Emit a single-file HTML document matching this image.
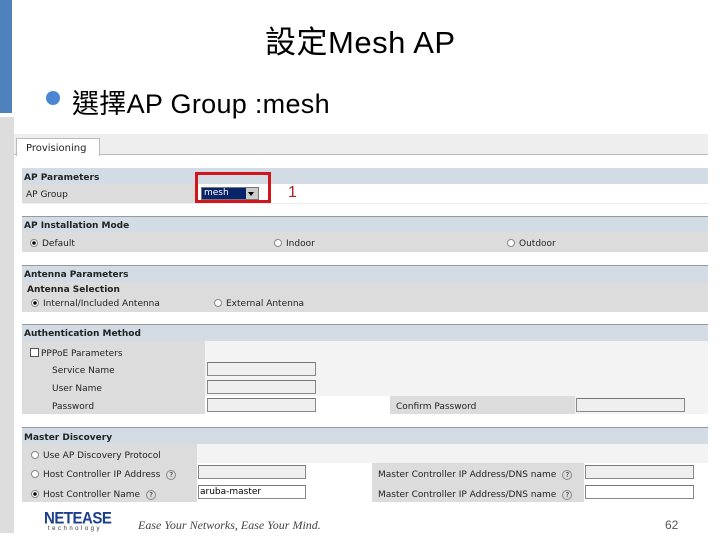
<!DOCTYPE html><html><head><meta charset="utf-8"><style>
*{margin:0;padding:0;box-sizing:border-box}
body{width:720px;height:540px;position:relative;background:#fff;font-family:"Liberation Sans","Noto Sans CJK TC",sans-serif;overflow:hidden}
.a{position:absolute}
.s{font-family:"DejaVu Sans",sans-serif;font-size:9px;color:#222;position:absolute;white-space:nowrap;margin-top:2px}
.b{font-weight:bold}
.hd{position:absolute;left:22px;width:686px;background:#d3dce5;border-top:1px solid #999}
.g{position:absolute;background:#dcdcdc}
.l{position:absolute;background:#f3f3f3}
.in{position:absolute;border:1px solid #888;border-top-color:#777;background:#efefef;height:14px}
.r{display:inline-block;width:8px;height:8px;border-radius:50%;border:1px solid #888;background:#fff;vertical-align:-1px;margin-right:4px}
.r.on{background:radial-gradient(#000 40%,#fff 45%)}
.q{display:inline-block;width:10px;height:10px;border-radius:50%;border:1px solid #888;font-size:7px;text-align:center;line-height:8px;margin-left:6px}
</style></head><body>
<div class="a" style="left:0;top:0;width:12px;height:113px;background:#4f81bd"></div>
<div class="a" style="left:0;top:117px;width:14px;height:416px;background:#ddd"></div>
<div class="a" style="left:265px;top:17px;font-size:31px;color:#000;letter-spacing:0.5px">設定Mesh AP</div>
<div class="a" style="left:46px;top:91px;width:14px;height:14px;border-radius:50%;background:#4a86d4"></div>
<div class="a" style="left:72px;top:82px;font-size:27px;color:#000;letter-spacing:0.3px">選擇AP Group :mesh</div>
<div class="a" style="left:14px;top:134px;width:694px;height:21px;background:#eee;border-bottom:1px solid #bbb"></div>
<div class="a" style="left:16px;top:138px;width:84px;height:18px;background:#fff;border:1px solid #bbb;border-bottom:none"></div>
<div class="s" style="left:26px;top:141px;font-size:10px">Provisioning</div>

<div class="hd" style="top:168px;height:16px;border-top:none"></div>
<div class="s b" style="left:24px;top:171px">AP Parameters</div>
<div class="g" style="left:22px;top:184px;width:173px;height:19px"></div>
<div class="a" style="left:22px;top:203px;width:686px;height:1px;background:#eee"></div>
<div class="s" style="left:26px;top:188px">AP Group</div>
<div class="a" style="left:201px;top:187px;width:58px;height:13px;background:#ccc;border:1px solid #777"></div>
<div class="a" style="left:202px;top:188px;width:44px;height:11px;background:#0a246a;color:#fff;font-size:9px;line-height:11px;padding-left:2px;font-family:'DejaVu Sans'">mesh</div>
<div class="a" style="left:248px;top:192px;border:3px solid transparent;border-top:4px solid #000"></div>
<div class="a" style="left:195px;top:172px;width:76px;height:31px;border:3px solid #d0161c"></div>
<div class="a" style="left:288px;top:184px;font-size:16px;color:#b02020">1</div>

<div class="hd" style="top:216px;height:16px"></div>
<div class="s b" style="left:24px;top:219px">AP Installation Mode</div>
<div class="g" style="left:22px;top:232px;width:686px;height:20px"></div>
<div class="s" style="left:30px;top:237px"><span class="r on"></span>Default</div>
<div class="s" style="left:274px;top:237px"><span class="r"></span>Indoor</div>
<div class="s" style="left:507px;top:237px"><span class="r"></span>Outdoor</div>

<div class="hd" style="top:265px;height:17px"></div>
<div class="s b" style="left:24px;top:268px">Antenna Parameters</div>
<div class="g" style="left:22px;top:282px;width:686px;height:30px"></div>
<div class="s b" style="left:27px;top:283px">Antenna Selection</div>
<div class="s" style="left:31px;top:297px"><span class="r on"></span>Internal/Included Antenna</div>
<div class="s" style="left:214px;top:297px"><span class="r"></span>External Antenna</div>

<div class="hd" style="top:324px;height:17px"></div>
<div class="s b" style="left:24px;top:327px">Authentication Method</div>
<div class="g" style="left:22px;top:341px;width:183px;height:73px"></div>
<div class="l" style="left:205px;top:341px;width:503px;height:55px"></div>
<div class="g" style="left:390px;top:396px;width:185px;height:18px"></div>
<div class="l" style="left:575px;top:396px;width:133px;height:18px"></div>
<div class="s" style="left:30px;top:346px"><span style="display:inline-block;width:9px;height:9px;border:1px solid #555;background:#fff;vertical-align:-1px;margin-right:2px"></span>PPPoE Parameters</div>
<div class="s" style="left:52px;top:364px">Service Name</div>
<div class="s" style="left:52px;top:382px">User Name</div>
<div class="s" style="left:52px;top:400px">Password</div>
<div class="in" style="left:207px;top:362px;width:109px"></div>
<div class="in" style="left:207px;top:380px;width:109px"></div>
<div class="in" style="left:207px;top:398px;width:109px"></div>
<div class="s" style="left:396px;top:400px">Confirm Password</div>
<div class="in" style="left:576px;top:398px;width:109px"></div>

<div class="hd" style="top:427px;height:17px"></div>
<div class="s b" style="left:24px;top:431px">Master Discovery</div>
<div class="g" style="left:22px;top:444px;width:175px;height:58px"></div>
<div class="l" style="left:197px;top:444px;width:511px;height:19px"></div>
<div class="g" style="left:372px;top:463px;width:212px;height:39px"></div>
<div class="s" style="left:31px;top:449px"><span class="r"></span>Use AP Discovery Protocol</div>
<div class="s" style="left:31px;top:468px"><span class="r"></span>Host Controller IP Address<span class="q">?</span></div>
<div class="s" style="left:31px;top:488px"><span class="r on"></span>Host Controller Name<span class="q">?</span></div>
<div class="in" style="left:198px;top:465px;width:108px"></div>
<div class="in" style="left:198px;top:485px;width:108px;background:#fff;font-size:9px;font-family:'DejaVu Sans';line-height:12px;padding-left:1px">aruba-master</div>
<div class="s" style="left:378px;top:468px">Master Controller IP Address/DNS name<span class="q">?</span></div>
<div class="s" style="left:378px;top:488px">Master Controller IP Address/DNS name<span class="q">?</span></div>
<div class="in" style="left:585px;top:465px;width:109px"></div>
<div class="in" style="left:585px;top:485px;width:109px;background:#fff"></div>

<div class="a" style="left:44px;top:510px;font-size:15px;font-weight:bold;color:#1c3f8c;letter-spacing:-0.5px;transform:scaleY(1.1)">NETEASE</div>
<div class="a" style="left:48px;top:526px;font-size:6px;letter-spacing:2.5px;color:#333">technology</div>
<div class="a" style="left:138px;top:518px;font-family:'Liberation Serif',serif;font-style:italic;font-size:12px;color:#444">Ease Your Networks, Ease Your Mind.</div>
<div class="a" style="left:665px;top:518px;font-size:12px;color:#555">62</div>
</body></html>
